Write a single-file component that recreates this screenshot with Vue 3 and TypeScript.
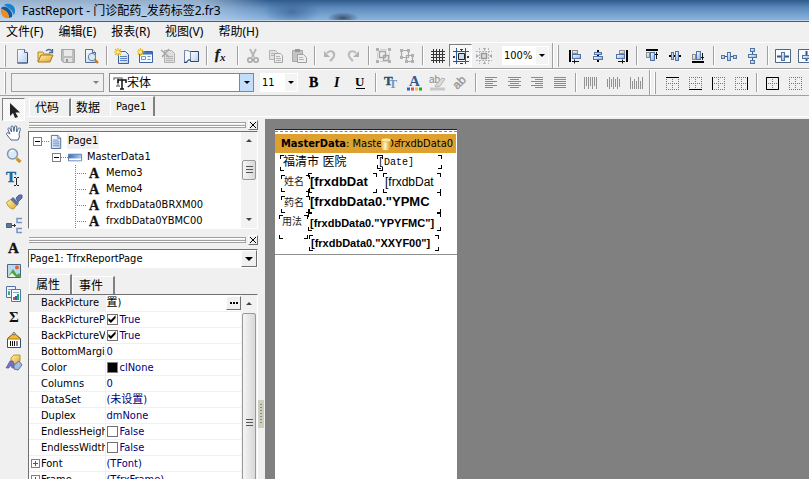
<script setup lang="ts">
import { ref } from 'vue'

interface ToolItem {
  icon?: string
  label?: string
  sep?: boolean
  pressed?: boolean
  disabled?: boolean
}
interface PropRow {
  name: string
  value: string
  kind?: 'check' | 'color' | 'ellipsis'
  checked?: boolean
  expandable?: boolean
}

const tool = (icon: string, label: string, extra: Partial<ToolItem> = {}): ToolItem => ({ icon, label, ...extra })
const off = (icon: string, label: string): ToolItem => tool(icon, label, { disabled: true })
const sep: ToolItem = { sep: true }

const lines = (rows: [number, number][], color = '#8a8a8a') =>
  `<path stroke="${color}" d="${rows.map(([x, w], i) => `M${x} ${2.5 + i * 2}h${w}`).join('')}"/>`
const bars = (cols: [number, number][]) =>
  `<path stroke="#929292" d="${cols.map(([y, h], i) => `M${1.5 + i * 2} ${y}v${h}`).join('')}"/>`
const dots =
  '<path stroke="#777" stroke-dasharray="1 1" d="M2 2.5h13M2 8.5h13M2 14.5h13M2.5 2v13M8.5 2v13M14.5 2v13"/>'
const box = (x: number, y: number, w: number, h: number, gray = false) =>
  `<rect x="${x + 0.5}" y="${y + 0.5}" width="${w - 1}" height="${h - 1}" fill="${gray ? 'url(#g-gray)' : 'url(#g-blue)'}" stroke="${gray ? '#8c8c8c' : '#4f74a5'}"/>`

const icons: Record<string, string> = {
  newFile:
    '<path d="M3.500 1.500h7l3 3v10.500h-10z" fill="url(#g-page)" stroke="#7c93b5"/><path d="M13.500 5v10h-10" fill="none" stroke="#2c4a79"/><path d="M10.500 1.500v3h3" fill="#fff" stroke="#4c668f"/>',
  open:
    '<path d="M1 14V4h5l1 2h6v3" fill="#f5d77c" stroke="#b98528"/><path d="M1 14l3-7h12l-3 7z" fill="url(#g-gold)" stroke="#ad761e"/><path d="M9 3c2-2 4-2 6 0M15.500 1v3.500H12" fill="none" stroke="#3f6a9d" stroke-width="1.300"/>',
  save:
    '<path d="M1.500 1.500h13v13h-11l-2-2z" fill="#bdbdbd" stroke="#a6a6a6"/><path d="M4 2h8v6H4z" fill="#e8e8e8"/><path d="M4 10h8v4H4z" fill="#e0e0e0"/><path d="M6 11h2v3H6z" fill="#999"/>',
  preview:
    '<path d="M2.500 1.500h7l3 3v10h-10z" fill="url(#g-page)" stroke="#536f99"/><path d="M9.500 1.500v3h3" fill="#fff" stroke="#4c668f"/><circle cx="9" cy="9" r="3.700" fill="#d5ebf8" stroke="#6f8094"/><path d="M12 12l3 3" stroke="#c37a22" stroke-width="2.400"/>',
  newPage:
    '<path d="M4.500 3.500h7l3 3v9h-10z" fill="url(#g-page)" stroke="#3c5f95"/><path d="M6 8.500h7M6 10.500h7M6 12.500h7" stroke="#5e83ba"/><path d="M4 0v8M0 4h8M1 1l6 6M7 1L1 7" stroke="#e9b71a" stroke-width="1.200"/><circle cx="4" cy="4" r="1.500" fill="#fff49b"/>',
  newDialog:
    '<path d="M2.500 3.500h13v11h-13z" fill="#f6faff" stroke="#3a62a0"/><path d="M3 4h12v2.500H3z" fill="#3f72c0"/><path d="M4.500 8.500h4v3h-4zM10.500 8.500h3M10.500 11.500h3" fill="none" stroke="#7594c0"/><path d="M3.500 0v8M0 4h7.500M1 1.500l5 5M6 1.500l-5 5" stroke="#e9b71a" stroke-width="1.200"/><circle cx="3.500" cy="4" r="1.500" fill="#fff49b"/>',
  deletePage:
    '<path d="M4.500 2.500h7l3 3v9h-10z" fill="#dedede" stroke="#b0b0b0"/><path d="M6 8.500h7M6 10.500h7M6 12.500h7" stroke="#b5b5b5"/><path d="M1 2l8 7M9 1L2 9" stroke="#a8a8a8" stroke-width="1.500"/>',
  pageSettings:
    '<path d="M7.500 3.500h8v10h-8z" fill="url(#g-page)" stroke="#2f4770"/><path d="M1.500 2.500h2c2 0 4 1 4 2v7.500c-2-1-3 0-4 2h-2z" fill="#f6f8fb" stroke="#7285a2"/><path d="M1 14.500h3c0-2 2-3 4-2" fill="none" stroke="#2f4770"/>',
  fx:
    '<text x="1" y="11" font-family="Liberation Serif, serif" font-size="14" font-weight="bold" font-style="italic" fill="#161616" stroke="#161616" stroke-width=".4">f</text><text x="6" y="13" font-family="Liberation Serif, serif" font-size="11" font-weight="bold" font-style="italic" fill="#161616">x</text>',
  cut:
    '<path d="M5 1l4 8M11 1L7 9" stroke="#b4b4b4" stroke-width="1.800"/><circle cx="5" cy="12" r="2.200" fill="none" stroke="#aaa" stroke-width="1.700"/><circle cx="11" cy="12" r="2.200" fill="none" stroke="#aaa" stroke-width="1.700"/>',
  copy:
    '<path d="M1.500 2.500h6l2 2v7h-8z" fill="#e2e2e2" stroke="#b2b2b2"/><path d="M6.500 5.500h6l2 2v7h-8z" fill="#eee" stroke="#a6a6a6"/><path d="M8 8.500h4M8 10.500h5M8 12.500h5M3 5.500h3M3 7.500h3" stroke="#b4b4b4"/>',
  paste:
    '<path d="M1.500 2.500h10v11h-10z" fill="#c4c4c4" stroke="#a8a8a8"/><path d="M4 1h5v3H4z" fill="#999"/><path d="M6.500 6.500h6l3 3v5h-9z" fill="#eee" stroke="#a0a0a0"/><path d="M8 9.500h4M8 11.500h5" stroke="#b2b2b2"/>',
  undo: '<path d="M5 5c3-3 8-2 7 3-.500 2-2 3-4 5" fill="none" stroke="#b8b8b8" stroke-width="2.200"/><path d="M2 3v6h6z" fill="#b2b2b2"/>',
  redo: '<path d="M11 5C8 2 3 3 4 8c.500 2 2 3 4 5" fill="none" stroke="#bcbcbc" stroke-width="2.200"/><path d="M14 3v6H8z" fill="#b2b2b2"/>',
  group:
    '<path d="M3.500 3.500h6v6h-6zM7.500 7.500h5v5h-5z" fill="none" stroke="#a6a6a6" stroke-width="1.400"/><path d="M0 0h3v3H0zM12 0h3v3h-3zM0 12h3v3H0zM12 12h3v3h-3z" fill="#b0b0b0"/><path d="M4 1.500h7M4 13.500h7M1.500 4v7M13.500 4v7" stroke="#d0d0d0"/>',
  ungroup:
    '<path d="M2.500 2.500h7v7h-7zM7.500 7.500h6v6h-6z" fill="none" stroke="#aaa" stroke-width="1.200"/><path d="M1 1h3v3H1zM8 1h3v3H8zM1 8h3v3H1zM12 6h3v3h-3zM6 12h3v3H6zM12 12h3v3h-3z" fill="#b0b0b0"/>',
  grid: '<path stroke="#363636" d="M1 3.500h14M1 6.500h14M1 9.500h14M1 12.500h14M3.500 1v14M6.500 1v14M9.500 1v14M12.500 1v14"/>',
  snap:
    '<path stroke="#2d568f" d="M0 3.500h16M0 13.500h16M3.500 0v16M12.500 0v16" /><path d="M4 4h8v9H4z" fill="#f4f4f4"/><path d="M5.500 5.500h6v6h-6z" fill="#c7dcf6" stroke="#222"/><path d="M7 1h3v1H7zM8 2h1v1H8zM7 15h3v1H7zM0 8h2v2H0zM14 8h2v2h-2z" fill="#1d3d72"/>',
  fit:
    '<path stroke="#b4b4b4" d="M0 3.500h16M0 12.500h16M3.500 0v16M12.500 0v16" stroke-dasharray="2 1"/><path d="M5.500 5.500h5v5h-5z" fill="#ddd" stroke="#999" stroke-width="1.500"/><path d="M7 0h3l-1.500 3zM7 16h3l-1.500-3zM0 6v4l3-2zM16 6v4l-3-2z" fill="#a8a8a8"/>',
  alignLeft: '<path d="M2 2h2v12H2z" fill="#000"/>' + box(5, 2, 6, 4, true) + box(5, 6, 9, 5) + '<path d="M5 13.500h7M7.500 11.500v4" stroke="#111"/>',
  alignCenter: '<path d="M7 2h2v12H7z" fill="#000"/>' + box(4, 4, 8, 3) + box(3, 8, 10, 4),
  alignRight: '<path d="M13 2h2v12h-2z" fill="#000"/>' + box(6, 2, 6, 4, true) + box(3, 6, 9, 5) + '<path d="M5 13.500h7M9.500 11.500v4" stroke="#111"/>',
  alignTop: '<path d="M2 1h12v2H2z" fill="#000"/>' + box(2, 4, 4, 6, true) + box(6, 4, 5, 9) + '<path d="M12.500 4v7M11 6.500h3" stroke="#111"/>',
  alignMiddle: '<path d="M2 7h12v2H2z" fill="#000"/>' + box(4, 4, 3, 8) + box(8, 3, 4, 10),
  alignBottom: '<path d="M2 13h12v2H2z" fill="#000"/>' + box(2, 6, 4, 6, true) + box(6, 3, 5, 9) + '<path d="M12.500 5v7M11 9.500h3" stroke="#111"/>',
  spaceH: '<path d="M0 8.500h16" stroke="#355982"/>' + box(0, 7, 4, 4) + box(6, 4, 4, 9) + box(12, 7, 4, 4),
  spaceV: '<path d="M8.500 0v16" stroke="#355982"/>' + box(6, 0, 5, 4) + box(4, 6, 9, 4) + box(6, 12, 5, 4),
  centerH: '<path d="M.500 1.500h15v13H.500z" fill="#f8fbff" stroke="#526581"/><path d="M2 8.500h12" stroke="#355982" stroke-width="2"/>' + box(6, 4, 4, 9),
  centerV: '<path d="M.500 1.500h15v13H.500z" fill="#f8fbff" stroke="#526581"/><path d="M8.500 3v10" stroke="#355982" stroke-width="2"/>' + box(4, 7, 9, 4),
  bold: '<text x="3" y="12" font-family="Liberation Serif, serif" font-size="14" font-weight="bold" stroke="#000" stroke-width=".3">B</text>',
  italic: '<text x="5" y="12" font-family="Liberation Serif, serif" font-size="14" font-weight="bold" font-style="italic">I</text>',
  underline: '<text x="3" y="11" font-family="Liberation Serif, serif" font-size="13" font-weight="bold">U</text><path d="M4 13.500h9" stroke="#000"/>',
  font: '<text x="1" y="10" font-family="Liberation Serif, serif" font-size="13" font-weight="bold" fill="#28506c" stroke="#28506c" stroke-width=".4">T</text><text x="6" y="13" font-family="Liberation Serif, serif" font-size="12" font-weight="bold" fill="#7592b8">T</text>',
  fontColor:
    '<text x="3" y="11" font-family="Liberation Serif, serif" font-size="15" font-weight="bold" fill="#345b92">A</text><path d="M1 12.500h3v3H1z" fill="#2463e7"/><path d="M5 12.500h3v3H5z" fill="#ef4747"/><path d="M9 12.500h3v3H9z" fill="#f4c526"/><path d="M13 12.500h3v3h-3z" fill="#00bc14"/>',
  highlight:
    '<text x="0" y="8" font-family="Liberation Sans, sans-serif" font-size="10" fill="#888">ab</text><path d="M6 11l7-8 3 1-5 7-4 1z" fill="#ddd" stroke="#b2b2b2"/><path d="M1 12.500h15v3H1z" fill="#c8c8c8"/>',
  rotate: '<text x="1" y="11" transform="rotate(-45 8 8)" font-family="Liberation Sans, sans-serif" font-size="12" fill="#999" stroke="#999" stroke-width=".4">ab</text>',
  textLeft: lines([[2, 12], [2, 8], [2, 12], [2, 8], [2, 12], [2, 8]]),
  textCenter: lines([[2, 13], [4, 9], [2, 13], [4, 9], [2, 13], [4, 9]]),
  textRight: lines([[2, 12], [6, 8], [2, 12], [6, 8], [2, 12], [6, 8]]),
  textJustify: lines([[2, 12], [2, 12], [2, 12], [2, 12], [2, 12], [2, 12]]),
  vTop: bars([[2, 12], [2, 9], [2, 12], [2, 9], [2, 12], [2, 9], [2, 12]]),
  vMiddle: bars([[4, 8], [2, 12], [4, 8], [2, 12], [4, 8], [2, 12], [4, 8]]),
  vBottom: bars([[2, 12], [6, 8], [4, 10], [6, 8], [2, 12], [6, 8], [2, 12]]),
  edgeTop: dots + '<path stroke="#000" d="M2 2.500h13"/>',
  edgeBottom: dots + '<path stroke="#000" d="M2 14.500h13"/>',
  edgeLeft: dots + '<path stroke="#000" d="M2.500 2v13"/>',
  edgeRight: dots + '<path stroke="#000" d="M14.500 2v13"/>',
  edgeAll: dots + '<path stroke="#000" fill="none" d="M2.500 2.500h12v12h-12z"/>',
  edgeNone: dots,
  arrow: '<path d="M4 1v13l3-3 2 5 3-1-2.500-4.500H14z" fill="#222"/>',
  hand: '<path d="M5 15L.700 9.500C0 7.500 2 7 3 8.500l1 .500-2-4.500c-.500-1.700 1.300-2.200 2-.700L5.600 7 5 2.200C5 .500 7 .500 7.200 2L8 6.500l.600-4.800c.300-1.400 2.200-1.200 2.200.300L10.600 7l1.700-3.500c.800-1.300 2.400-.500 2 1L13 9l.400 3-1.400 3z" fill="#fff" stroke="#4a678f"/>',
  magnifier: '<circle cx="6.500" cy="6" r="5" fill="#d7ecfa" stroke="#8996aa" stroke-width="1.500"/><path d="M4 4c1-1.500 3-2 4-1" stroke="#fff" stroke-width="1.500" fill="none"/><path d="M10.500 10.500l4 3.500" stroke="#d29223" stroke-width="3"/>',
  textTool: '<text x="0" y="11" font-family="Liberation Serif, serif" font-size="15" font-weight="bold" fill="#18669a" stroke="#18669a" stroke-width=".4">T</text><path d="M8 6.500h2M11 6.500h2M10.500 7v7M8 14.500h2M11 14.500h2" stroke="#222"/>',
  brush: '<path d="M10 4l3-3h3v3l-4 4z" fill="#5d74b8" stroke="#4c5f9b"/><path d="M7 3l6 6-2 3-7-6z" fill="#637197"/><path d="M4.500 5.500l6 6-3 3.500c-3 0-6-3-7-6.500z" fill="url(#g-gold)" stroke="#b6922d"/>',
  connector: '<path d="M.500 6.500h5v4h-5z" fill="#5c7897" stroke="#46627f"/><path d="M6 8.500h4M8.500 7v3" stroke="#333"/><path d="M16 1.500h-5v4h5M16 11.500h-5v4h5" fill="none" stroke="#7894b9" stroke-width="1.500"/>',
  memo: '<text x="2" y="13" font-family="Liberation Serif, serif" font-size="15" font-weight="bold" fill="#111" stroke="#111" stroke-width=".3">A</text>',
  picture: '<path d="M1.500 1.500h13v13h-13z" fill="#b9d9ed" stroke="#496682"/><path d="M2 14l5-8 4 6 2-2 2 4z" fill="#54a048"/><path d="M2 14l4-4 4 4z" fill="#eaf8df"/><circle cx="11" cy="4.500" r="2" fill="#df6339"/>',
  subreport: '<path d="M.500.500h9v11h-9z" fill="#edf4ff" stroke="#5375a2"/><path d="M2 3.500h6M2 5.500h2" stroke="#7ea4d0"/><path d="M2 6h2v3H2z" fill="#45a960"/><path d="M5.500 3.500h9v12h-9z" fill="#f8fbff" stroke="#5375a2"/><path d="M7 6.500h6" stroke="#7ea4d0"/><path d="M7 11h2v3H7z" fill="#e64343"/><path d="M9 10h2v4H9z" fill="#2463c7"/><path d="M11 8h2v6h-2z" fill="#29a94c"/>',
  sigma: '<text x="3" y="13" font-family="Liberation Serif, serif" font-size="15" font-weight="bold" fill="#111">Σ</text>',
  barcode: '<path d="M1.500 6.500L7 2h2l5.500 4.500v9h-13z" fill="#fff" stroke="#31506c"/><path d="M1.500 7L7 2h2l5.500 5z" fill="#f5bc30" stroke="#b87c15"/><circle cx="8" cy="1.800" r="1.200" fill="#fff" stroke="#666"/><path d="M4.500 9v5M6.500 9v5M8.500 9v5M11 9v5" stroke="#111"/>',
  shapes: '<path d="M5 3l3-3h6v6l-3 3H5z" fill="url(#g-gold)" stroke="#b6932f"/><path d="M0 13l4-7h3l2 7H6l-.500-2H4l-1 2z" fill="#7770c7" stroke="#494b97" stroke-width=".6"/><path d="M8 10l5-4 3 4-4 5-4-1z" fill="#a8bede" stroke="#596fa0"/>',
  treePage: '<path d="M2.500 1.500h7l3 3v11h-10z" fill="url(#g-page)" stroke="#4d6e9c"/><path d="M4 6.500h6M4 8.500h7M4 10.500h7M4 12.500h7" stroke="#7292bf"/><path d="M9.500 1.500v3h3" fill="#fff" stroke="#4d6e9c"/>',
  band: '<path d="M.500 4.500h14v7H.500z" fill="url(#g-band)" stroke="#5b7cae"/><path d="M1 9h13v2H1z" fill="#fff"/>',
}

const standardTools: ToolItem[] = [
  tool('newFile', '新建'), tool('open', '打开'), off('save', '保存'), tool('preview', '预览'), sep,
  tool('newPage', '新建页面'), tool('newDialog', '新建对话框'), off('deletePage', '删除页面'), tool('pageSettings', '页面设置'), sep,
  tool('fx', '表达式'), sep,
  off('cut', '剪切'), off('copy', '复制'), off('paste', '粘贴'), sep,
  off('undo', '撤销'), off('redo', '重做'), sep,
  off('group', '组合'), off('ungroup', '取消组合'), sep,
  tool('grid', '网格'), tool('snap', '对齐网格', { pressed: true }), off('fit', '调整到网格'),
]
const alignTools: ToolItem[] = [
  tool('alignLeft', '左对齐'), tool('alignCenter', '水平居中'), tool('alignRight', '右对齐'), sep,
  tool('alignTop', '顶对齐'), tool('alignMiddle', '垂直居中'), tool('alignBottom', '底对齐'), sep,
  tool('spaceH', '水平间距'), tool('spaceV', '垂直间距'), sep,
  tool('centerH', '带区水平居中'), tool('centerV', '带区垂直居中'),
]
const textTools: ToolItem[] = [
  tool('bold', '粗体'), tool('italic', '斜体'), tool('underline', '下划线'), sep,
  tool('font', '字体'), tool('fontColor', '字体颜色'), off('highlight', '高亮'), off('rotate', '旋转'), sep,
  off('textLeft', '文字左对齐'), off('textCenter', '文字居中'), off('textRight', '文字右对齐'), off('textJustify', '两端对齐'), sep,
  off('vTop', '靠上'), off('vMiddle', '居中'), off('vBottom', '靠下'),
]
const frameTools: ToolItem[] = [
  tool('edgeTop', '上边框'), tool('edgeBottom', '下边框'), tool('edgeLeft', '左边框'), tool('edgeRight', '右边框'), sep,
  tool('edgeAll', '全部边框'), tool('edgeNone', '无边框'),
]
const objectTools: ToolItem[] = [
  tool('arrow', '选择'), tool('hand', '移动'), tool('magnifier', '缩放'), tool('textTool', '编辑文本'),
  tool('brush', '复制格式'), tool('connector', '连接'), tool('memo', '文本'), tool('picture', '图片'),
  tool('subreport', '子报表'), tool('sigma', '系统文本'), tool('barcode', '条形码'), tool('shapes', '图形'),
]

const menus = ['文件(F)', '编辑(E)', '报表(R)', '视图(V)', '帮助(H)']
const pages = ['代码', '数据', 'Page1']
const activePage = ref('Page1')
const inspectorTabs = ['属性', '事件']
const activeInspector = ref('属性')
const activeTool = ref('arrow')
const treeLeaves = ['Memo3', 'Memo4', 'frxdbData0BRXM00', 'frxdbData0YBMC00']

const props = ref<PropRow[]>([
  { name: 'BackPicture', value: '置)', kind: 'ellipsis' },
  { name: 'BackPicturePrintable', value: 'True', kind: 'check', checked: true },
  { name: 'BackPictureVisible', value: 'True', kind: 'check', checked: true },
  { name: 'BottomMargin', value: '0' },
  { name: 'Color', value: 'clNone', kind: 'color' },
  { name: 'Columns', value: '0' },
  { name: 'DataSet', value: '(未设置)' },
  { name: 'Duplex', value: 'dmNone' },
  { name: 'EndlessHeight', value: 'False', kind: 'check', checked: false },
  { name: 'EndlessWidth', value: 'False', kind: 'check', checked: false },
  { name: 'Font', value: '(TFont)', expandable: true },
  { name: 'Frame', value: '(TfrxFrame)', expandable: true },
])

const memos = [
  { id: 'title', text: '福清市 医院' },
  { id: 'date', text: '[Date]' },
  { id: 'name-label', text: '姓名' },
  { id: 'name', text: '[frxdbDat' },
  { id: 'sex', text: '[frxdbDat' },
  { id: 'drug-label', text: '药名' },
  { id: 'drug', text: '[frxdbData0."YPMC' },
  { id: 'usage-label', text: '用法' },
  { id: 'usage', text: '[frxdbData0."YPYFMC"]' },
  { id: 'extra', text: '[frxdbData0."XXYF00"]' },
]
</script>

<template>
  <div class="window">
    <svg class="defs" aria-hidden="true">
      <linearGradient id="g-page" x2="1" y2="1"><stop stop-color="#fff" /><stop offset="1" stop-color="#b9cfef" /></linearGradient>
      <linearGradient id="g-blue" x2="1" y2="1"><stop stop-color="#fff" /><stop offset="1" stop-color="#86abe0" /></linearGradient>
      <linearGradient id="g-gray" x2="1" y2="1"><stop stop-color="#fff" /><stop offset="1" stop-color="#bbb" /></linearGradient>
      <linearGradient id="g-gold" x2="1" y2="1"><stop stop-color="#fff3ae" /><stop offset="1" stop-color="#e0a52d" /></linearGradient>
      <linearGradient id="g-band" x2="1" y2="0"><stop stop-color="#3e6dbb" /><stop offset="1" stop-color="#b5d0f4" /></linearGradient>
      <linearGradient id="g-cyl" x2="1" y2="0"><stop stop-color="#e5a51c" /><stop offset=".4" stop-color="#fff8c5" /><stop offset="1" stop-color="#d28b0c" /></linearGradient>
    </svg>

    <header class="titlebar">
      <svg class="logo" viewBox="0 0 16 16" aria-hidden="true">
        <path d="M4 2c2-1 5-2 8 0 3 2 4 6 2 10-1-1-1-3-3-5C9 5 6 3 4 2z" fill="#1685d1" />
        <path d="M2 4c3-1 6 0 8 3 2 2 3 5 2 7l-3 1C9 10 6 7 1 6z" fill="#145a9b" />
        <path d="M1 6c5 1 8 5 8 9-5 1-9-3-8-9z" fill="#f18a22" />
      </svg>
      <h1>FastReport - 门诊配药_发药标签2.fr3</h1>
    </header>

    <nav class="menubar">
      <button v-for="m in menus" :key="m" type="button">{{ m }}</button>
    </nav>

    <div class="toolbar-row">
      <div class="toolbar">
        <span class="grip"></span>
        <template v-for="(t, i) in standardTools" :key="i">
          <span v-if="t.sep" class="sep"></span>
          <button v-else type="button" class="tool" :class="{ pressed: t.pressed }" :disabled="t.disabled" :aria-label="t.label">
            <svg viewBox="0 0 16 16" v-html="icons[t.icon!]"></svg>
          </button>
        </template>
        <label class="combo flat zoom"><select aria-label="缩放比例"><option>100%</option></select><i></i></label>
      </div>
      <div class="toolbar last">
        <span class="grip"></span>
        <template v-for="(t, i) in alignTools" :key="i">
          <span v-if="t.sep" class="sep"></span>
          <button v-else type="button" class="tool" :aria-label="t.label">
            <svg viewBox="0 0 16 16" v-html="icons[t.icon!]"></svg>
          </button>
        </template>
      </div>
    </div>

    <div class="toolbar-row">
      <div class="toolbar text-bar">
        <span class="grip"></span>
        <label class="combo style"><select aria-label="样式" disabled><option></option></select><i></i></label>
        <label class="combo face">
          <svg class="tt" viewBox="0 0 14 14" aria-hidden="true">
            <path d="M1 4V2h8v2M5 2v8M3 10h4" fill="none" stroke="#888" stroke-width="1.500" />
            <path d="M5 7V4h8v3M9 4v9M7 13h4" fill="none" stroke="#111" stroke-width="1.500" />
          </svg>
          <select aria-label="字体名称"><option>宋体</option></select><i></i>
        </label>
        <label class="combo flat size"><select aria-label="字号"><option>11</option></select><i></i></label>
        <template v-for="(t, i) in textTools" :key="i">
          <span v-if="t.sep" class="sep"></span>
          <button v-else type="button" class="tool" :disabled="t.disabled" :aria-label="t.label">
            <svg viewBox="0 0 16 16" v-html="icons[t.icon!]"></svg>
          </button>
        </template>
      </div>
      <div class="toolbar last">
        <span class="grip"></span>
        <template v-for="(t, i) in frameTools" :key="i">
          <span v-if="t.sep" class="sep"></span>
          <button v-else type="button" class="tool" :aria-label="t.label">
            <svg viewBox="0 0 16 16" v-html="icons[t.icon!]"></svg>
          </button>
        </template>
      </div>
    </div>

    <div class="body">
      <aside class="objects">
        <button
          v-for="t in objectTools" :key="t.icon" type="button" class="tool" :class="{ pressed: activeTool === t.icon }"
          :aria-label="t.label" @click="activeTool = t.icon!"
        >
          <svg viewBox="0 0 16 16" v-html="icons[t.icon!]"></svg>
        </button>
      </aside>

      <div class="workspace">
        <div class="tabs page-tabs" role="tablist">
          <button
            v-for="p in pages" :key="p" type="button" role="tab" class="tab" :class="{ active: activePage === p }"
            :aria-selected="activePage === p" @click="activePage = p"
          >{{ p }}</button>
        </div>

        <div class="panes">
          <div class="dock">
            <div class="dock-head"><span class="groove"></span><button type="button" class="close" aria-label="关闭"></button></div>
            <div class="tree-box">
              <ul class="tree">
                <li class="node root"><span class="toggle minus"></span><span class="stub"></span><svg viewBox="0 0 16 16" v-html="icons.treePage"></svg><span class="caption selected">Page1</span></li>
                <li class="node child"><span class="toggle minus"></span><span class="stub"></span><svg viewBox="0 0 16 16" v-html="icons.band"></svg><span class="caption">MasterData1</span></li>
                <li v-for="l in treeLeaves" :key="l" class="node leaf"><span class="stub"></span><svg viewBox="0 0 16 16" v-html="icons.memo"></svg><span class="caption">{{ l }}</span></li>
              </ul>
              <div class="scroll"><b class="up"></b><span class="thumb short"></span><b class="down"></b></div>
            </div>

            <div class="dock-head second"><span class="groove"></span><button type="button" class="close" aria-label="关闭"></button></div>
            <label class="combo object"><select aria-label="对象"><option>Page1: TfrxReportPage</option></select><i></i></label>
            <div class="tabs" role="tablist">
              <button
                v-for="p in inspectorTabs" :key="p" type="button" role="tab" class="tab" :class="{ active: activeInspector === p }"
                :aria-selected="activeInspector === p" @click="activeInspector = p"
              >{{ p }}</button>
            </div>
            <div class="inspector">
              <table class="props">
                <tbody>
                  <tr v-for="(p, i) in props" :key="p.name" :class="{ current: i === 0 }">
                    <th scope="row"><div class="key"><span class="mark"><span v-if="p.expandable" class="toggle plus"></span></span><span class="key-name">{{ p.name }}</span></div></th>
                    <td>
                      <label v-if="p.kind === 'check'" class="val"><input v-model="p.checked" type="checkbox" />{{ p.checked ? 'True' : 'False' }}</label>
                      <div v-else class="val">
                        <span v-if="p.kind === 'color'" class="swatch"></span>{{ p.value }}
                        <button v-if="p.kind === 'ellipsis'" type="button" class="more" aria-label="编辑"><i></i><i></i><i></i></button>
                      </div>
                    </td>
                  </tr>
                </tbody>
              </table>
              <div class="scroll"><b class="up"></b><span class="thumb long"></span></div>
            </div>
          </div>
          <div class="splitter"><span></span></div>

          <main class="canvas">
            <section class="page">
              <div class="band">
                <div class="band-head">
                  <strong>MasterData</strong><span class="band-name">: MasterData1</span>
                  <span class="dataset">
                    <svg viewBox="0 0 12 14" aria-hidden="true"><path d="M1 3v8c0 3 10 3 10 0V3z" fill="url(#g-cyl)" /><ellipse cx="6" cy="3" rx="5" ry="2" fill="#ffe9a0" stroke="#dda31c" stroke-width=".6" /></svg>
                    <span>frxdbData0</span>
                  </span>
                </div>
                <div class="band-body">
                  <div v-for="m in memos" :key="m.id" class="memo" :class="m.id">{{ m.text }}</div>
                </div>
              </div>
            </section>
          </main>
        </div>
      </div>
    </div>
  </div>
</template>

<style>
body {
  margin: 0;
  background: #f0f0f0;
}
</style>

<style scoped>
* {
  box-sizing: border-box;
}
.window {
  display: flex;
  flex-direction: column;
  height: 100vh;
  overflow: hidden;
  background: #f0f0f0;
  color: #000;
  font: 11px/16px 'DejaVu Sans Condensed', 'Noto Sans CJK SC', sans-serif;
}
.defs {
  position: absolute;
  width: 0;
  height: 0;
}
button,
select {
  margin: 0;
  padding: 0;
  border: 0;
  background: none;
  color: inherit;
  font: inherit;
}
svg {
  display: block;
  flex: none;
  width: 16px;
  height: 16px;
  overflow: visible;
}

.titlebar {
  display: flex;
  flex: none;
  align-items: center;
  gap: 6px;
  height: 22px;
  overflow: hidden;
  border-bottom: 1px solid #4b5a70;
  background:
    linear-gradient(transparent 20px, #c4d6e8 20px),
    radial-gradient(ellipse 16px 6px at 343px 18px, rgba(35, 50, 75, 0.75), transparent),
    radial-gradient(ellipse 28px 14px at 292px 12px, rgba(40, 80, 130, 0.55), transparent),
    linear-gradient(90deg, rgba(220, 232, 245, 0.6) 0, rgba(210, 225, 242, 0.6) 200px, rgba(160, 190, 222, 0) 270px),
    linear-gradient(#2f5a8c 0, #5d8bbd 8px, #86b1dc 19px);
}
h1 {
  margin: 0;
  font: 12px/20px 'Noto Sans', 'Noto Sans CJK SC', sans-serif;
}
.menubar {
  display: flex;
  flex: none;
  gap: 15px;
  height: 20px;
  padding-left: 6px;
  font: 12px/20px 'Noto Sans', 'Noto Sans CJK SC', sans-serif;
}

.toolbar-row {
  display: flex;
  flex: none;
  height: 27px;
  overflow: hidden;
  border-top: 1px solid #fff;
  border-bottom: 1px solid #a0a0a0;
}
.toolbar {
  display: flex;
  flex: none;
  align-items: center;
  padding-right: 3px;
  border-right: 1px solid #a0a0a0;
}
.toolbar.text-bar {
  padding-right: 1px;
}
.toolbar.last {
  border-right: 0;
  border-left: 1px solid #fff;
}
.grip {
  flex: none;
  width: 2px;
  height: 22px;
  margin: 0 4px;
  border-left: 1px solid #fff;
  border-right: 1px solid #a0a0a0;
}
.toolbar.last .grip {
  margin-left: 3px;
}
.sep {
  flex: none;
  width: 8px;
  height: 19px;
  background: linear-gradient(90deg, transparent 4px, #a0a0a0 4px 5px, #fff 5px 6px, transparent 6px);
}
.tool {
  display: flex;
  flex: none;
  align-items: center;
  justify-content: center;
  width: 23px;
  height: 23px;
}
.tool.pressed {
  border: 1px solid;
  border-color: #808080 #fff #fff #808080;
  background: repeating-conic-gradient(#fff 0 25%, #f0f0f0 0 50%) 0 0 / 2px 2px;
}

.combo {
  display: flex;
  flex: none;
  align-items: center;
  height: 19px;
  border: 1px solid #a0a0a0;
}
.combo select {
  flex: 1;
  min-width: 0;
  height: 100%;
  appearance: none;
  outline: 0;
}
.combo i {
  display: flex;
  flex: none;
  align-items: center;
  justify-content: center;
  align-self: stretch;
  width: 14px;
}
.combo i::before {
  content: '';
  border: solid transparent;
  border-width: 3px 3px 0;
  border-top-color: #000;
}
.combo.flat {
  padding-left: 1px;
  background: #fff;
  border-color: #fff;
}
.combo.flat i {
  width: 12px;
  background: #f4f4f4;
}
.zoom {
  width: 47px;
  margin-left: 7px;
}
.combo.style {
  width: 93px;
  margin-left: 1px;
}
.combo.style i::before {
  border-top-color: #808080;
}
.combo.face {
  width: 145px;
  margin: 0 6px 0 5px;
  padding-left: 3px;
  border-color: #3399ff;
  background: #fff;
  font-size: 12px;
}
.face .tt {
  width: 14px;
  height: 14px;
}
.combo.face i {
  border-left: 1px solid #3399ff;
  background: #c4ddf8;
}
.size {
  width: 38px;
  margin-right: 4px;
}

.body {
  display: flex;
  flex: 1;
  min-height: 0;
}
.objects {
  display: flex;
  flex: none;
  flex-direction: column;
  width: 27px;
  padding: 2px 0 0 2px;
}
.workspace {
  display: flex;
  flex: 1;
  flex-direction: column;
  min-width: 0;
}
.tabs {
  display: flex;
  flex: none;
  align-items: flex-end;
  height: 20px;
  padding-left: 1px;
  font-size: 12px;
}
.page-tabs {
  height: 21px;
  padding-left: 2px;
  border-bottom: 1px solid #fff;
}
.tab {
  height: 18px;
  padding: 0 10px 0 6px;
  border-top: 1px solid #fff;
  border-left: 1px solid #fff;
  border-right: 2px solid #808080;
}
.tab.active {
  height: 20px;
}
.page-tabs .tab {
  padding-left: 5px;
}
.page-tabs .tab:nth-child(2) {
  padding-left: 4px;
  border-right: 0;
}
.page-tabs .tab:last-child {
  padding-right: 7px;
  font-size: 11px;
}
.panes {
  display: flex;
  flex: 1;
  min-height: 0;
  padding-top: 2px;
}
.dock {
  display: flex;
  flex: none;
  flex-direction: column;
  width: 231px;
  padding-left: 1px;
}
.dock-head {
  display: flex;
  flex: none;
  align-items: center;
  gap: 2px;
  height: 12px;
  padding-left: 1px;
}
.dock-head.second {
  margin-top: 5px;
  margin-bottom: 3px;
}
.groove {
  flex: 1;
  height: 6px;
  border: solid #a0a0a0;
  border-width: 1px 1px 1px 0;
  background: linear-gradient(#fff 1px, transparent 1px 2px, #a0a0a0 2px 3px, #fff 3px);
}
.close {
  width: 10px;
  height: 10px;
  border: 1px solid;
  border-color: #fff #707070 #707070 #fff;
  background:
    linear-gradient(45deg, transparent 45%, #000 45% 56%, transparent 56%) center / 6px 6px no-repeat,
    linear-gradient(-45deg, transparent 45%, #000 45% 56%, transparent 56%) center / 6px 6px no-repeat;
}
.tree-box {
  display: flex;
  flex: none;
  height: 98px;
  overflow: hidden;
  border: 1px solid;
  border-color: #707070 #fff #fff #707070;
  background: #fff;
}
.tree {
  flex: 1;
  margin: 0;
  padding: 1px 0 0 4px;
  list-style: none;
}
.node {
  display: flex;
  align-items: center;
  height: 16px;
}
.node svg {
  width: 15px;
  height: 15px;
}
.node.child {
  padding-left: 19px;
}
.node.leaf {
  padding-left: 42px;
  background: repeating-linear-gradient(#808080 0 1px, transparent 1px 2px) 42px 0 / 1px 100% no-repeat;
}
.caption {
  margin-left: 3px;
  padding: 0 1px;
}
.selected {
  background: #f0f0f0;
}
.toggle {
  flex: none;
  width: 9px;
  height: 9px;
  border: 1px solid #808080;
  background: linear-gradient(#000 0 0) center / 5px 1px no-repeat;
}
.toggle.plus {
  background:
    linear-gradient(#555 0 0) center / 5px 1px no-repeat,
    linear-gradient(#555 0 0) center / 1px 5px no-repeat;
}
.stub {
  flex: none;
  width: 7px;
  height: 1px;
  background: repeating-linear-gradient(90deg, #808080 0 1px, transparent 1px 2px);
}
.leaf .stub {
  width: 12px;
}
.scroll {
  display: flex;
  flex: none;
  flex-direction: column;
  align-items: center;
  width: 16px;
  padding-bottom: 4px;
  background: #f2f2f2;
}
.scroll b {
  flex: none;
  border: 3px solid transparent;
}
.scroll .up {
  margin-top: 4px;
  border-bottom-color: #444;
}
.scroll .down {
  margin-top: auto;
  border-top-color: #444;
}
.thumb {
  display: flex;
  flex: none;
  align-items: center;
  justify-content: center;
  width: 14px;
  height: 20px;
  border: 1px solid #999;
  border-radius: 2px;
  background: linear-gradient(90deg, #f5f5f5, #d8d8d8);
}
.thumb::before {
  content: '';
  width: 7px;
  height: 8px;
  background: repeating-linear-gradient(#555 0 1px, transparent 1px 3px);
}
.thumb.short {
  margin-top: 18px;
}
.thumb.long {
  height: 220px;
  margin-top: 8px;
}
.combo.object {
  margin-bottom: 6px;
  padding-left: 1px;
  border-color: #707070 #fff #fff #707070;
  background: #fff;
}
.combo.object i {
  width: 16px;
  border: 1px solid;
  border-color: #fff #707070 #707070 #fff;
  background: #f0f0f0;
}
.combo.object i::before {
  border-width: 4px 4px 0;
}
.inspector {
  display: flex;
  flex: 1;
  min-height: 0;
  overflow: hidden;
  border-top: 1px solid #707070;
  border-left: 1px solid #707070;
  border-right: 1px solid #fff;
  background: #fff;
}
.props {
  flex: 1;
  align-self: flex-start;
  width: 100%;
  table-layout: fixed;
  border-collapse: collapse;
}
.props th,
.props td {
  height: 16px;
  padding: 0;
  border-bottom: 1px solid #f0f0f0;
  font-weight: normal;
  line-height: 15px;
  text-align: left;
}
.props th {
  width: 76px;
  border-right: 1px solid #f0f0f0;
}
.key {
  display: flex;
}
.key-name {
  flex: 1;
  min-width: 0;
  overflow: hidden;
  white-space: nowrap;
}
.mark {
  display: flex;
  flex: none;
  align-items: center;
  width: 12px;
  padding-left: 2px;
}
.current th {
  background: #f0f0f0;
}
.val {
  display: flex;
  align-items: center;
  height: 15px;
  padding-left: 1px;
  color: #000080;
}
.current .val {
  color: #000;
}
.val input {
  display: flex;
  width: 11px;
  height: 11px;
  margin: 0 2px 0 0;
  border: 1px solid #707070;
  background: #fff;
  appearance: none;
}
.val input:checked::before {
  content: '';
  width: 9px;
  height: 9px;
  background: #000;
  clip-path: polygon(10% 40%, 38% 62%, 90% 8%, 90% 38%, 38% 94%, 10% 70%);
}
.swatch {
  width: 11px;
  height: 11px;
  margin-right: 2px;
  border: 1px solid #808080;
  background: #000;
}
.more {
  display: flex;
  align-items: center;
  justify-content: center;
  gap: 1px;
  width: 15px;
  height: 14px;
  margin-left: auto;
  border: 1px solid;
  border-color: #fff #707070 #707070 #fff;
  background: #f0f0f0;
}
.more i {
  width: 2px;
  height: 2px;
  background: #000;
}
.splitter {
  display: flex;
  flex: none;
  align-items: flex-start;
  width: 7px;
  padding-top: 281px;
}
.splitter span {
  width: 6px;
  height: 28px;
  background:
    repeating-linear-gradient(#888 0 1px, transparent 1px 3px) center / 2px 20px no-repeat,
    #cfcfc0;
}

.canvas {
  display: flex;
  flex: 1;
  min-width: 0;
  padding: 10px 0 0 10px;
  overflow: hidden;
  background: #808080;
}
.page {
  flex: none;
  width: 182px;
  border-top: 1px solid #222;
  background: #fff;
}
.band {
  margin-top: 1px;
  border-top: 1px dashed #888;
  border-bottom: 1px solid #909090;
}
.band-head {
  display: flex;
  align-items: center;
  height: 19px;
  margin-top: 2px;
  margin-right: 1px;
  padding-left: 6px;
  background: #dea12f;
  white-space: nowrap;
}
.band-name {
  flex: 1;
  min-width: 0;
  overflow: hidden;
}
.dataset {
  display: flex;
  flex: none;
  align-items: center;
  margin-left: -18px;
  padding-right: 3px;
}
.dataset svg {
  width: 12px;
  height: 14px;
}
.dataset span {
  padding-left: 5px;
}
.band-body {
  position: relative;
  height: 101px;
}
.memo {
  --c: linear-gradient(#000 0 0);
  position: absolute;
  padding-left: 3px;
  background:
    var(--c) 0 0 / 4px 1px, var(--c) 0 0 / 1px 4px,
    var(--c) 100% 0 / 4px 1px, var(--c) 100% 0 / 1px 4px,
    var(--c) 0 100% / 4px 1px, var(--c) 0 100% / 1px 4px,
    var(--c) 100% 100% / 4px 1px, var(--c) 100% 100% / 1px 4px;
  background-repeat: no-repeat;
  white-space: nowrap;
}
.title { left: 5px; top: 2px; width: 103px; height: 16px; font-size: 12px; line-height: 15px; }
.date { left: 102px; top: 2px; width: 65px; height: 14px; padding-left: 1px; font: 10px/15px 'Liberation Mono', monospace; }
.name-label, .drug-label, .usage-label { width: 29px; height: 17px; font-size: 10px; line-height: 14px; color: #222; }
.name-label { left: 6px; top: 22px; }
.drug-label { left: 6px; top: 43px; }
.usage-label { left: 4px; top: 62px; height: 24px; }
.name, .sex, .drug, .usage, .extra { padding-left: 2px; font-family: 'Liberation Sans', sans-serif; font-weight: bold; }
.name { left: 33px; top: 20px; width: 69px; height: 20px; font-size: 13px; line-height: 18px; }
.sex { left: 108px; top: 20px; width: 58px; height: 20px; font-size: 12px; font-weight: normal; line-height: 18px; }
.drug { left: 33px; top: 39px; width: 133px; height: 21px; font-size: 13px; line-height: 20px; }
.usage { left: 33px; top: 60px; width: 133px; height: 18px; font-size: 11px; line-height: 20px; }
.extra { left: 34px; top: 82px; width: 130px; height: 16px; font-size: 11px; line-height: 16px; }
</style>
